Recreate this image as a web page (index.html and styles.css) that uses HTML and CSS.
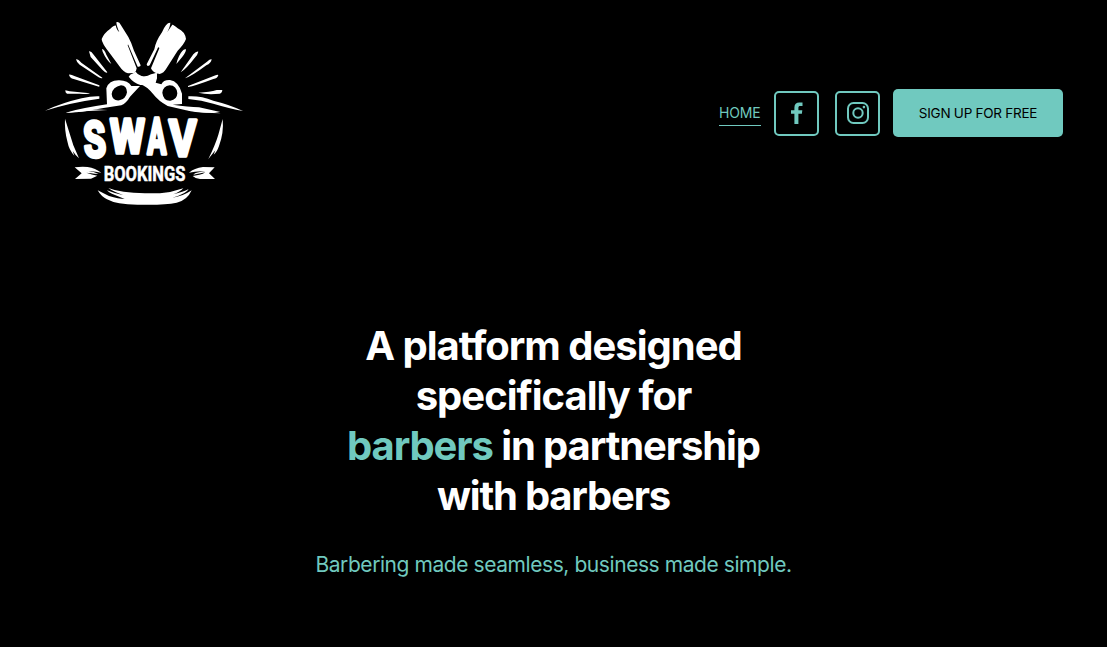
FILE: index.html
```html
<!DOCTYPE html>
<html lang="en">
<head>
<meta charset="utf-8">
<title>SWAV Bookings</title>
<link rel="stylesheet" href="styles.css">
</head>
<body>
<header class="header">
  <a class="logo" aria-label="SWAV Bookings">
    <svg viewBox="0 0 630 600" width="210" height="200" fill="#fff">
      <!-- left clipper, rays and scissor handle -->
      <g>
        <path d="M185 72Q192 54 211 41Q223 30 228 32Q227 39 238 52Q229 32 229 22Q237 18 243 31L265 66Q274 82 282 107L302 151Q302 156 293 155L265 90Q264 87 263 91L290 160Q289 170 283 174L264 175Q250 171 240 156L211 117Q184 83 185 72Z"/>
        <path d="M186 102Q194 104 199 119L214 147Q199 135 188 110Z"/>
        <path d="M147 109Q153 108 161 119L202 172Q199 176 187 164L152 126Z"/>
        <path d="M108 133Q114 132 124 143L187 188Q187 192 176 187L119 149Q110 143 108 133Z"/>
        <path d="M87 179Q91 177 105 184L178 211Q181 217 172 214L101 192Q89 189 87 179Z"/>
        <path d="M76 226L89 229L150 235Q146 239 119 236L81 236Q75 233 76 226Z"/>
        <path d="M15 287Q68 263 125 250Q155 243 178 244V251Q95 262 15 287Z"/>
        <path fill-rule="evenodd" d="M77 293Q120 280 201 268L199 220Q207 195 238 196Q264 197 274 213L300 213L270 245Q260 263 244 271Q190 279 145 287Q105 293 77 293ZM215 237Q217 258 238 256Q258 252 261 232Q260 211 243 211Q218 216 215 237Z"/>
        <path d="M266 185Q270 177 280 175L287 170Q292 179 306 184Q318 188 330 182L352 173L348 193L340 203Q320 211 301 210Q281 204 266 185Z"/>
      </g>
      <!-- right clipper, rays and scissor handle -->
      <g transform="translate(300 0)">
        <path d="M91 23Q91 33 82 51L97 29Q100 28 113 40Q135 50 138 72Q132 88 113 107L80 159Q71 175 59 177Q38 174 33 160L58 100Q56 92 51 104L29 151Q21 156 20 148L43 103Q47 79 66 52Q78 22 91 23Z"/>
        <path d="M109 147Q115 121 127 108Q132 101 138 103Q138 112 126 127Z"/>
        <path d="M122 172L160 118Q169 108 175 110Q173 121 162 131Q140 160 122 172Z"/>
        <path d="M135 190L201 140Q210 132 215 133Q213 145 199 151Q155 184 135 190Z"/>
        <path d="M144 213L219 184Q232 177 235 180Q233 190 220 192Q164 213 144 216Z"/>
        <path d="M175 233Q210 231 230 225L247 225Q246 235 239 236Q201 240 175 233Z"/>
        <path d="M145 244Q182 242 220 257Q270 269 309 288Q270 281 220 266Q185 256 145 252Z"/>
        <path fill-rule="evenodd" d="M0 183Q20 187 33 178L48 174Q52 178 51 190L47 203L64 208Q70 194 90 195Q116 199 126 236V267L98 269Q145 275 177 277L241 291Q180 297 138 286L83 273Q55 258 40 238Q20 213 0 207ZM67 233Q70 258 91 257Q111 255 112 235Q110 212 89 211Q69 214 67 233Z"/>
      </g>
      <!-- badge sides and ribbons -->
      <g transform="translate(0 285)">
        <path d="M77 8Q145 -5 203 0Q150 2 77 8Z"/>
        <path d="M75 26L100 106L117 145Q105 134 98 123L103 137Q87 121 82 94Q73 58 75 26Z"/>
        <path d="M104 172Q125 169 143 171Q166 175 184 188Q161 182 145 184Q161 185 176 192Q149 189 139 188Q156 194 172 197L153 206L105 207L125 190Z"/>
        <path d="M173 241Q190 250 207 258Q236 267 254 267L225 255Q205 247 201 241Q228 252 249 255L228 247Q212 240 205 234Q242 249 315 250H360Q396 247 430 235Q420 246 400 253Q430 246 446 237Q440 251 397 263Q425 261 455 241Q441 272 410 278Q370 286 300 284Q231 285 201 268Q183 259 173 241Z"/>
      </g>
      <g transform="translate(300 285)">
        <path d="M143 0Q205 1 242 10Q190 10 143 0Z"/>
        <path d="M248 27Q252 68 237 108Q230 128 221 134L226 121L205 147Q226 104 235 74Z"/>
        <path d="M224 172L207 190L225 207H180Q165 205 158 198L178 194Q190 192 196 187L160 194Q168 186 196 184Q170 182 147 188Q163 174 189 171Z"/>
      </g>
      <g class="logo-name">
        <text x="130" y="426" font-size="150" textLength="66" lengthAdjust="spacingAndGlyphs" transform="rotate(-4 160 370)">S</text>
        <text x="210" y="415" font-size="146" textLength="104" lengthAdjust="spacingAndGlyphs">W</text>
        <text x="322" y="418" font-size="148" textLength="57" lengthAdjust="spacingAndGlyphs">A</text>
        <text x="387" y="424" font-size="150" textLength="82" lengthAdjust="spacingAndGlyphs">V</text>
      </g>
      <text class="logo-sub" x="191" y="497" font-size="61" textLength="245" lengthAdjust="spacingAndGlyphs">BOOKINGS</text>
    </svg>
  </a>
  <nav class="nav">
    <a class="nav-link">HOME</a>
    <a class="social" aria-label="Facebook">
      <svg class="facebook" viewBox="0 0 12 22" width="12" height="22"><path fill="currentColor" d="M3.400 22V11.800H0V8.300h3.400V5.500C3.400 2 5.300.400 8.300.400h3.200V4H9.300C7.900 4 7.400 4.600 7.400 5.700v2.600h3.900l-.4 3.500H7.400V22z"/></svg>
    </a>
    <a class="social" aria-label="Instagram">
      <svg viewBox="0 0 22 22" width="22" height="22" fill="none" stroke="currentColor" stroke-width="2"><rect x="1" y="1" width="20" height="20" rx="5.500"/><circle cx="11" cy="11" r="4.700"/><circle cx="16.900" cy="5.100" r="1.300" fill="currentColor" stroke="none"/></svg>
    </a>
    <a class="button">SIGN UP FOR FREE</a>
  </nav>
</header>
<main class="hero">
  <h1 class="title">
    <span class="line line-1">A platform designed</span>
    <span class="line">specifically for</span>
    <span class="line line-3"><span class="accent">barbers</span> in partnership</span>
    <span class="line line-4">with barbers</span>
  </h1>
  <p class="tagline">Barbering made seamless, business made simple.</p>
</main>
</body>
</html>
```
FILE: styles.css
```css
* { box-sizing: border-box; }
body {
  margin: 0;
  min-height: 647px;
  background: #000;
  color: #fff;
  font-family: Inter, "Liberation Sans", sans-serif;
}
.header {
  display: flex;
  justify-content: space-between;
  align-items: center;
  height: 226px;
  padding: 0 44px 0 40px;
}
.logo svg { display: block; margin-top: 4px; }
.logo-name {
  font-family: Roboto, sans-serif;
  font-weight: 700;
  stroke: #fff;
  stroke-width: 11;
  stroke-linejoin: round;
}
.logo-sub { font-family: Roboto, sans-serif; font-weight: 700; stroke: #fff; stroke-width: 1.5; }
.nav { display: flex; align-items: center; color: #70c9bf; }
.nav-link {
  width: 42px;
  height: 26px;
  margin-right: 13px;
  border-bottom: 1px solid #70c9bf;
  font-size: 14px;
  line-height: 25px;
  letter-spacing: -0.15px;
  white-space: nowrap;
}
.social {
  display: flex;
  align-items: center;
  justify-content: center;
  width: 45px;
  height: 45px;
  margin-right: 16px;
  border: 2px solid #70c9bf;
  border-radius: 5px;
}
.social + .social { margin-right: 13px; }
.button {
  display: flex;
  align-items: center;
  justify-content: center;
  width: 170px;
  height: 48px;
  border-radius: 5px;
  background: #70c9bf;
  color: #000;
  font-size: 13.5px;
  letter-spacing: -0.25px;
  white-space: nowrap;
}
.hero { padding-top: 95px; text-align: center; }
.title {
  margin: 0;
  font-size: 40px;
  line-height: 50px;
  font-weight: 700;
  letter-spacing: -1px;
}
.line { display: block; }
.line-3 { letter-spacing: -1.1px; }
.line-4 { letter-spacing: -1.2px; }
.accent { color: #70c9bf; }
.tagline {
  margin: 30px 0 0;
  color: #70c9bf;
  font-size: 21px;
  line-height: 28px;
  letter-spacing: -0.43px;
}
```
